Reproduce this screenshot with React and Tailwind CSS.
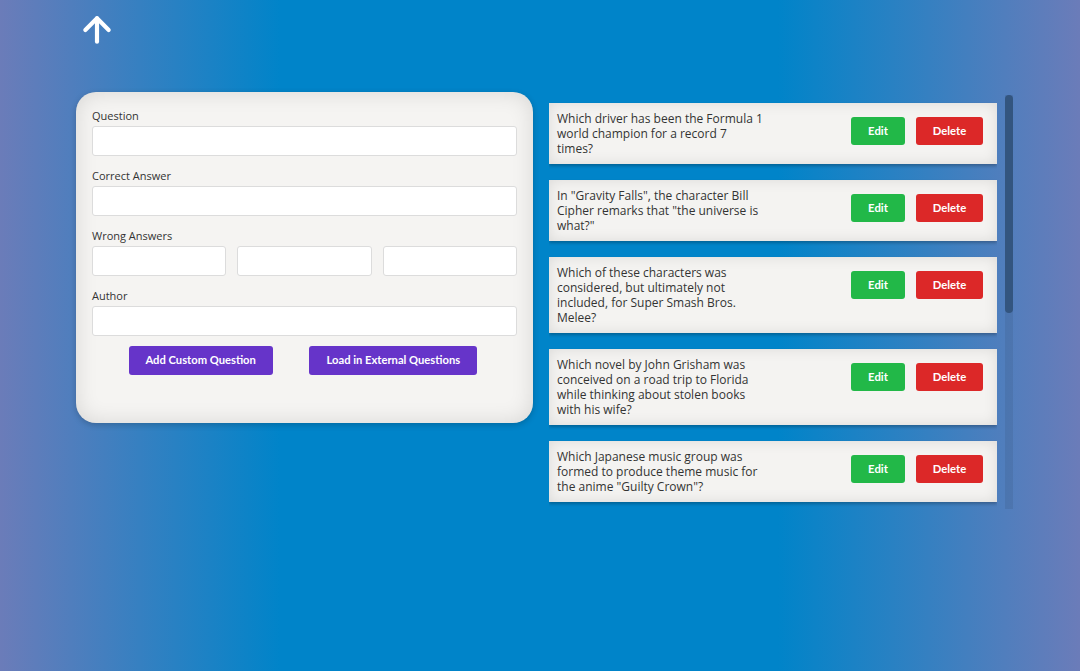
import React, { useState } from 'react';
import { ArrowUp } from 'lucide-react';

// Lines are split as they wrap in the design
const questions = [
    ['Which driver has been the Formula 1', 'world champion for a record 7', 'times?'],
    ['In "Gravity Falls", the character Bill', 'Cipher remarks that "the universe is', 'what?"'],
    ['Which of these characters was', 'considered, but ultimately not', 'included, for Super Smash Bros.', 'Melee?'],
    ['Which novel by John Grisham was', 'conceived on a road trip to Florida', 'while thinking about stolen books', 'with his wife?'],
    ['Which Japanese music group was', 'formed to produce theme music for', 'the anime "Guilty Crown"?'],
];

const Field = ({ label, children }) => (
    <div className="flex flex-col">
        <label className="text-[11px] leading-[15px] text-[#333] mb-[3px]">{label}</label>
        {children}
    </div>
);

const inputClass = 'h-[30px] w-full rounded-[3px] border border-[#dcdcdc] bg-white px-2 text-[12px] outline-none';

const QuestionCard = ({ lines }) => (
    <div className="flex items-start justify-between bg-[#f4f3f1] py-2 pl-2 pr-[14px] shadow-[inset_0_0_14px_rgba(0,0,0,0.1),0_2px_3px_rgba(0,0,0,0.25)]">
        <p className="text-[12px] leading-[15px] text-[#333]">
            {lines.map((l, i) => (
                <span key={i} className="block whitespace-nowrap">{l}</span>
            ))}
        </p>
        <div className="mt-[6px] flex gap-[11px] font-['Lato'] text-[11.3px] font-bold text-white">
            <button className="h-[28px] w-[54px] rounded-[3px] bg-[#22b848]">Edit</button>
            <button className="h-[28px] w-[67px] rounded-[3px] bg-[#dc2828]">Delete</button>
        </div>
    </div>
);

const App = () => {
    const [form, setForm] = useState({ question: '', correct: '', w1: '', w2: '', w3: '', author: '' });
    const set = (field) => (e) => setForm(prev => ({ ...prev, [field]: e.target.value }));

    return (
        <div className="min-h-[671px] bg-[linear-gradient(90deg,#6b7cb9_0%,#0084c9_26%,#0084c9_72%,#6b7cb9_100%)] pl-[77px] pt-[10px] font-['Open_Sans',sans-serif]">
            <ArrowUp size={40} strokeWidth={2.5} color="white" />

            <div className="mt-[42px] flex items-start gap-4">
                {/* Form */}
                <div className="w-[457px] -ml-px rounded-[20px] bg-[#f5f4f2] px-4 pt-4 pb-[48px] shadow-[inset_0_0_22px_rgba(0,0,0,0.12),0_2px_6px_rgba(0,0,0,0.2)]">
                    <div className="flex flex-col gap-3">
                        <Field label="Question">
                            <input className={inputClass} value={form.question} onChange={set('question')} />
                        </Field>
                        <Field label="Correct Answer">
                            <input className={inputClass} value={form.correct} onChange={set('correct')} />
                        </Field>
                        <Field label="Wrong Answers">
                            <div className="grid grid-cols-3 gap-[11px]">
                                <input className={inputClass} value={form.w1} onChange={set('w1')} />
                                <input className={inputClass} value={form.w2} onChange={set('w2')} />
                                <input className={inputClass} value={form.w3} onChange={set('w3')} />
                            </div>
                        </Field>
                        <Field label="Author">
                            <input className={inputClass} value={form.author} onChange={set('author')} />
                        </Field>
                    </div>
                    <div className="mt-[10px] flex justify-evenly pr-[3px] font-['Lato'] text-[11.2px] font-bold text-white">
                        <button className="h-[29px] w-[144px] rounded-[3px] bg-[#6634c9]">Add Custom Question</button>
                        <button className="h-[29px] w-[168px] rounded-[3px] bg-[#6634c9]">Load in External Questions</button>
                    </div>
                </div>

                {/* Question list with scrollbar */}
                <div className="mt-[3px] flex h-[414px] w-[464px] gap-2">
                    <div className="flex-1 overflow-hidden pt-2">
                        <div className="flex flex-col gap-4">
                            {questions.map((q, i) => (
                                <QuestionCard key={i} lines={q} />
                            ))}
                        </div>
                    </div>
                    <div className="h-full w-2 bg-[rgba(0,0,0,0.07)]">
                        <div className="h-[218px] w-full rounded-full bg-[#33557f]" />
                    </div>
                </div>
            </div>
        </div>
    );
};

export default App;
